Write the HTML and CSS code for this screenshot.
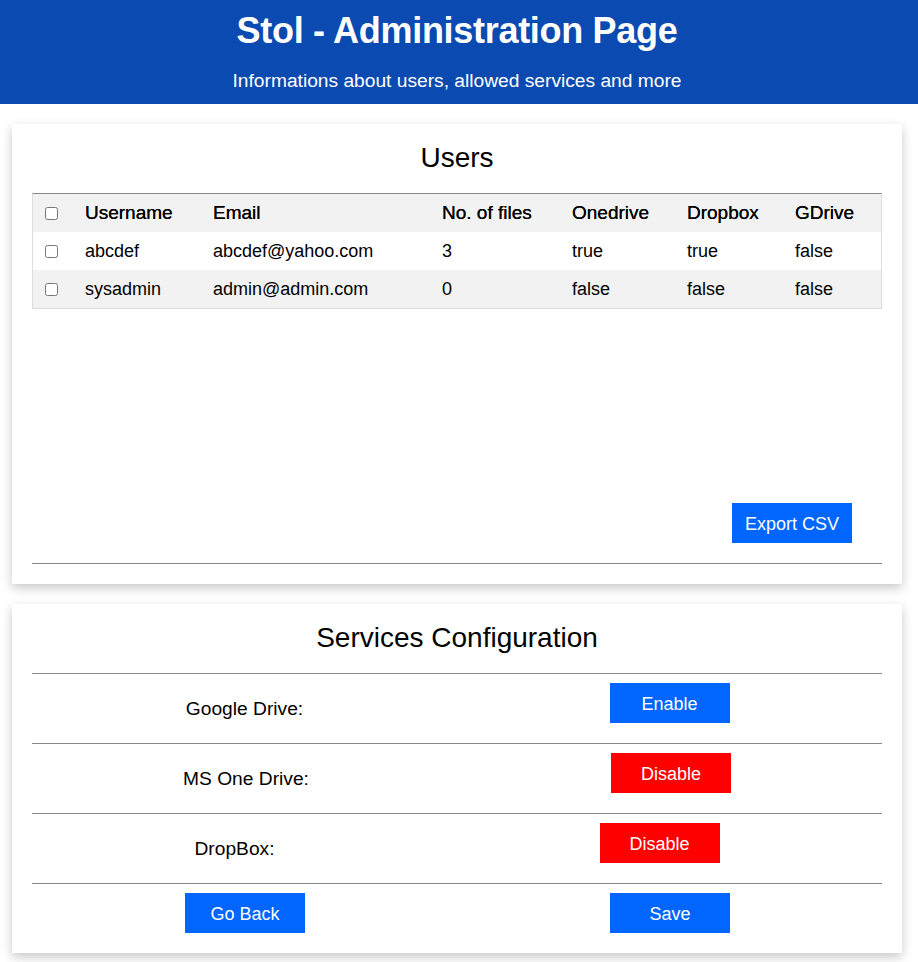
FILE: index.html
```html
<!DOCTYPE html>
<html lang="en">
<head>
<meta charset="utf-8">
<title>Stol - Administration Page</title>
<link rel="stylesheet" href="styles.css">
</head>
<body>
<header class="page-header">
  <h1 class="page-title">Stol - Administration Page</h1>
  <p class="page-subtitle">Informations about users, allowed services and more</p>
</header>

<section class="card">
  <h2 class="card-title">Users</h2>
  <table class="users-table">
    <colgroup>
      <col class="c-check">
      <col class="c-user">
      <col class="c-email">
      <col class="c-files">
      <col class="c-one">
      <col class="c-drop">
      <col class="c-gdrive">
    </colgroup>
    <thead>
      <tr>
        <th class="check-cell"><input type="checkbox"></th>
        <th>Username</th>
        <th>Email</th>
        <th>No. of files</th>
        <th>Onedrive</th>
        <th>Dropbox</th>
        <th>GDrive</th>
      </tr>
    </thead>
    <tbody>
      <tr>
        <td class="check-cell"><input type="checkbox"></td>
        <td>abcdef</td>
        <td>abcdef@yahoo.com</td>
        <td>3</td>
        <td>true</td>
        <td>true</td>
        <td>false</td>
      </tr>
      <tr class="alt">
        <td class="check-cell"><input type="checkbox"></td>
        <td>sysadmin</td>
        <td>admin@admin.com</td>
        <td>0</td>
        <td>false</td>
        <td>false</td>
        <td>false</td>
      </tr>
    </tbody>
  </table>
  <div class="export-bar">
    <button class="btn btn-blue">Export CSV</button>
  </div>
  <div class="card-rule"></div>
</section>

<section class="card card-services">
  <h2 class="card-title">Services Configuration</h2>
  <div class="service-row row-gdrive">
    <span class="service-label">Google Drive:</span>
    <div class="service-action"><button class="btn btn-blue">Enable</button></div>
  </div>
  <div class="service-row row-onedrive">
    <span class="service-label">MS One Drive:</span>
    <div class="service-action"><button class="btn btn-red">Disable</button></div>
  </div>
  <div class="service-row row-dropbox">
    <span class="service-label">DropBox:</span>
    <div class="service-action"><button class="btn btn-red">Disable</button></div>
  </div>
  <div class="service-row row-actions">
    <div class="service-action"><button class="btn btn-blue">Go Back</button></div>
    <div class="service-action"><button class="btn btn-blue">Save</button></div>
  </div>
</section>
</body>
</html>
```

FILE: styles.css
```css
* { box-sizing: border-box; }

body {
  margin: 0;
  background: #ffffff;
  font-family: "Liberation Sans", Arial, sans-serif;
  color: #000;
}

.page-header {
  background: #0b4ab1;
  color: #fff;
  text-align: center;
  height: 104px;
  padding: 10px 4px 0 0;
}

.page-title {
  margin: 0;
  font-size: 36px;
  line-height: 41px;
  font-weight: bold;
  letter-spacing: -0.3px;
}

.page-subtitle {
  margin: 18px 0 0;
  padding-top: 1px;
  font-size: 19.2px;
  line-height: 22px;
}

.card {
  width: 890px;
  margin: 20px 0 0 12px;
  padding: 0 20px 20px;
  background: #fff;
  box-shadow: 0 4px 10px rgba(0, 0, 0, 0.22);
}

.card-title {
  margin: 0;
  padding: 18px 0 19px;
  text-align: center;
  font-size: 28px;
  line-height: 32px;
  font-weight: normal;
}

.users-table {
  width: 850px;
  table-layout: fixed;
  border-collapse: separate;
  border-spacing: 0;
  border: 1px solid #dddddd;
  border-top: 1px solid #8a8a8a;
  font-size: 18px;
}

.c-check { width: 40px; }
.c-user { width: 128px; }
.c-email { width: 229px; }
.c-files { width: 130px; }
.c-one { width: 115px; }
.c-drop { width: 108px; }
.c-gdrive { width: 98px; }

.users-table th,
.users-table td {
  text-align: left;
  padding: 0 12px;
  height: 38px;
  white-space: nowrap;
}

.users-table th {
  font-weight: normal;
  font-size: 19px;
  text-shadow: 0 0 0.4px #000;
}

.users-table thead tr,
.users-table tr.alt {
  background: #f2f2f2;
}

.users-table .check-cell {
  padding: 0 0 0 8px;
}

.check-cell input {
  margin: 0 0 0 4px;
  width: 13px;
  height: 13px;
  vertical-align: middle;
}

.export-bar {
  display: flex;
  justify-content: flex-end;
  padding: 194px 30px 0 0;
}

.btn {
  width: 120px;
  height: 40px;
  border: none;
  color: #fff;
  font-family: "Liberation Sans", Arial, sans-serif;
  font-size: 18px;
  padding: 2px 0 0;
  cursor: pointer;
}

.btn-blue { background: #0066ff; }
.btn-red { background: #ff0000; }

.card-rule {
  margin-top: 20px;
  border-top: 1px solid #888;
}

.card-services {
  padding-bottom: 20px;
  margin-bottom: 9px;
}

.service-row {
  display: grid;
  border-top: 1px solid #888;
  padding: 9px 0 8px;
  min-height: 70px;
  align-items: center;
}

.row-gdrive { grid-template-columns: 425px 1fr; }
.row-onedrive { grid-template-columns: 428px 1fr; }
.row-dropbox { grid-template-columns: 405px 1fr; }
.row-actions {
  grid-template-columns: 426px 1fr;
  min-height: 0;
  padding-bottom: 0;
}

.service-label {
  text-align: center;
  font-size: 19.2px;
  line-height: 22px;
}

.service-action {
  display: flex;
  justify-content: center;
  align-self: start;
}
```
